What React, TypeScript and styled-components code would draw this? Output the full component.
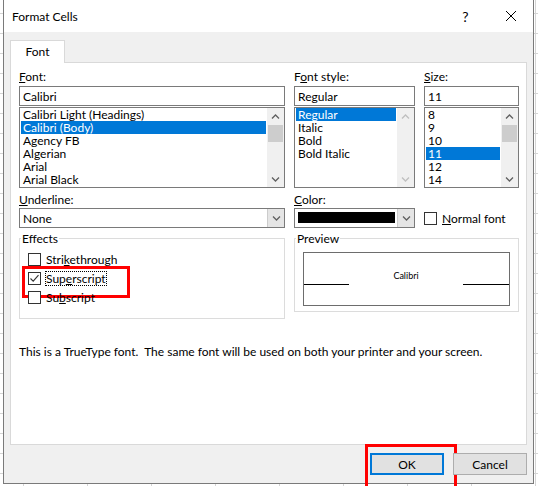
import React from "react";
import styled, { createGlobalStyle } from "styled-components";

const FONT = `Lato, "Liberation Sans", Arial, sans-serif`;

const Global = createGlobalStyle`
  html, body { margin: 0; padding: 0; }
  body {
    width: 538px;
    height: 486px;
    overflow: hidden;
    background-color: #fff;
    background-image:
      linear-gradient(#d4d4d4 1px, transparent 1px),
      linear-gradient(90deg, #d4d4d4 1px, transparent 1px);
    background-size: 100% 20px, 64px 100%;
    background-position: 0 13px, 535px 0;
    font-family: ${FONT};
    font-size: 12px;
    color: #000;
  }
  * { box-sizing: border-box; }
`;

const Dialog = styled.div`
  margin-left: 3px;
  width: 531px;
  height: 484px;
  border: 1px solid #7a7a7a;
  border-top: none;
  background: #f0f0f0;
  display: flex;
  flex-direction: column;
`;

const TitleBar = styled.div`
  height: 32px;
  flex: none;
  background: #fff;
  display: flex;
  align-items: center;
  padding-left: 8px;
`;

const TitleText = styled.div`
  flex: 1;
  font-size: 12px;
`;

const TitleButton = styled.div`
  width: 45px;
  height: 32px;
  display: flex;
  align-items: center;
  justify-content: center;
  font-size: 14px;
`;

const Body = styled.div`
  flex: 1;
  display: flex;
  flex-direction: column;
  padding: 8px 6px 0 6px;
`;

const TabStrip = styled.div`
  display: flex;
  height: 22px;
`;

const Tab = styled.div`
  position: relative;
  z-index: 1;
  width: 55px;
  height: 23px;
  background: #fff;
  border: 1px solid #d9d9d9;
  border-bottom: none;
  display: flex;
  align-items: center;
  justify-content: center;
  padding-bottom: 1px;
`;

const Panel = styled.div`
  height: 383px;
  background: #fff;
  border: 1px solid #d9d9d9;
  padding: 6px 7px 0 8px;
`;

const Grid = styled.div`
  display: grid;
  grid-template-columns: 266px 121px 95px;
  column-gap: 9px;
  align-items: start;
`;

const Field = styled.div<{ $top?: number }>`
  display: flex;
  flex-direction: column;
  margin-top: ${(p) => p.$top ?? 0}px;
`;

const Label = styled.div`
  height: 15px;
  line-height: 15px;
  margin-bottom: 1px;
  white-space: nowrap;
`;

const TopLabel = styled(Label)`
  margin-bottom: 2px;
`;

const TextBox = styled.div`
  height: 20px;
  border: 1px solid #7a7a7a;
  padding: 0 3px;
  display: flex;
  align-items: center;
  background: #fff;
`;

const ListBox = styled.div`
  height: 81px;
  margin-top: 1px;
  border: 1px solid #7a7a7a;
  display: flex;
  background: #fff;
`;

const Items = styled.div`
  flex: 1;
  padding: 0 1px;
  min-width: 0;
`;

const Item = styled.div<{ $selected?: boolean }>`
  height: 13px;
  line-height: 13px;
  padding-left: 2px;
  white-space: nowrap;
  overflow: hidden;
  background: ${(p) => (p.$selected ? "#0078d7" : "transparent")};
  color: ${(p) => (p.$selected ? "#fff" : "#000")};
`;

const ScrollBar = styled.div`
  width: 17px;
  flex: none;
  background: #f0f0f0;
  display: flex;
  flex-direction: column;
`;

const ArrowBox = styled.div`
  height: 17px;
  flex: none;
  display: flex;
  align-items: center;
  justify-content: center;
`;

const Track = styled.div`
  flex: 1;
  display: flex;
  flex-direction: column;
`;

const Thumb = styled.div`
  height: 17px;
  margin: 0 1px;
  background: #cdcdcd;
`;

const Combo = styled.div`
  height: 20px;
  border: 1px solid #7a7a7a;
  display: flex;
  background: #fff;
`;

const ComboText = styled.div`
  flex: 1;
  padding-left: 3px;
  display: flex;
  align-items: center;
`;

const Swatch = styled.div`
  width: 97px;
  height: 11px;
  margin: 3px 2px 0 3px;
  background: #000;
`;

const DropButton = styled.div`
  width: 17px;
  flex: none;
  background: #e5e5e5;
  border-left: 1px solid #cccccc;
  display: flex;
  align-items: center;
  justify-content: center;
`;

const CheckRow = styled.div<{ $highlight?: boolean }>`
  position: relative;
  height: 19px;
  display: flex;
  align-items: center;
  gap: 5px;
  white-space: nowrap;
  &::after {
    content: "";
    display: ${(p) => (p.$highlight ? "block" : "none")};
    position: absolute;
    left: -6px;
    top: -3px;
    width: 102px;
    height: 26px;
    border: 3px solid #ff0000;
  }
`;

const Box = styled.div`
  width: 13px;
  height: 13px;
  flex: none;
  border: 1px solid #333;
  background: #fff;
  display: flex;
  align-items: center;
  justify-content: center;
`;

const FocusLabel = styled.span`
  line-height: 13px;
  outline: 1px dotted #000;
`;

const NormalFont = styled.div`
  align-self: end;
  height: 20px;
  display: flex;
  align-items: center;
  gap: 5px;
  white-space: nowrap;
`;

const Group = styled.fieldset<{ $span?: boolean }>`
  margin: 3px 0 0 0;
  padding: 0;
  min-inline-size: 0;
  border: 1px solid #dcdcdc;
  grid-column: ${(p) => (p.$span ? "2 / 4" : "auto")};
`;

const Legend = styled.legend`
  margin-left: 1px;
  padding: 0 1px;
  line-height: 15px;
  height: 15px;
`;

const EffectsBody = styled.div`
  padding: 4px 0 11px 8px;
`;

const PreviewBody = styled.div`
  padding: 6px 8px 5px 8px;
`;

const PreviewBox = styled.div`
  height: 54px;
  border: 1px solid #6d6d6d;
  background: #fff;
  display: grid;
  grid-template-columns: 45px 1fr 46px;
`;

const BaseLine = styled.div`
  margin-top: 31px;
  height: 1px;
  background: #000;
`;

const PreviewText = styled.div`
  padding-top: 17px;
  font-size: 9px;
  line-height: 11px;
  text-align: center;
`;

const Description = styled.p`
  margin: 25px 0 0 0;
  line-height: 15px;
  white-space: nowrap;
`;

const Buttons = styled.div`
  display: flex;
  justify-content: flex-end;
  gap: 9px;
  margin-top: 8px;
`;

const Button = styled.div<{ $default?: boolean; $highlight?: boolean }>`
  position: relative;
  width: 74px;
  height: 22px;
  background: #e1e1e1;
  border: ${(p) => (p.$default ? "2px solid #0078d7" : "1px solid #adadad")};
  display: flex;
  align-items: center;
  justify-content: center;
  &::after {
    content: "";
    display: ${(p) => (p.$highlight ? "block" : "none")};
    position: absolute;
    left: -7px;
    top: -11px;
    width: 86px;
    height: 40px;
    border: 3px solid #ff0000;
  }
`;

const Chevron = ({ down, color = "#606060" }: { down?: boolean; color?: string }) => (
  <svg width="9" height="6" viewBox="0 0 9 6">
    <path
      d={down ? "M1 1.5 L4.5 5 L8 1.5" : "M1 4.5 L4.5 1 L8 4.5"}
      fill="none"
      stroke={color}
      strokeWidth="1.3"
    />
  </svg>
);

const CheckMark = () => (
  <svg width="11" height="11" viewBox="0 0 11 11">
    <path d="M1.5 5.5 L4.2 8.2 L9.5 2.2" fill="none" stroke="#333" strokeWidth="1.1" />
  </svg>
);

const CloseIcon = () => (
  <svg width="10" height="10" viewBox="0 0 10 10">
    <path d="M0 0 L10 10 M10 0 L0 10" stroke="#000" strokeWidth="1" />
  </svg>
);

type ListProps = { items: string[]; selected: number; disabled?: boolean; thumb?: boolean };

const List = ({ items, selected, disabled, thumb }: ListProps) => (
  <ListBox>
    <Items>
      {items.map((it, i) => (
        <Item key={it} $selected={i === selected}>
          {it}
        </Item>
      ))}
    </Items>
    <ScrollBar>
      <ArrowBox>
        <Chevron color={disabled ? "#bfbfbf" : "#606060"} />
      </ArrowBox>
      <Track>{thumb && <Thumb />}</Track>
      <ArrowBox>
        <Chevron down color={disabled ? "#bfbfbf" : "#606060"} />
      </ArrowBox>
    </ScrollBar>
  </ListBox>
);

export default function App() {
  return (
    <>
      <Global />
      <Dialog>
        <TitleBar>
          <TitleText>Format Cells</TitleText>
          <TitleButton>?</TitleButton>
          <TitleButton>
            <CloseIcon />
          </TitleButton>
        </TitleBar>
        <Body>
          <TabStrip>
            <Tab>Font</Tab>
          </TabStrip>
          <Panel>
            <Grid>
              <Field>
                <TopLabel>
                  <u>F</u>ont:
                </TopLabel>
                <TextBox>Calibri</TextBox>
                <List
                  items={["Calibri Light (Headings)", "Calibri (Body)", "Agency FB", "Algerian", "Arial", "Arial Black"]}
                  selected={1}
                  thumb
                />
              </Field>
              <Field>
                <TopLabel>
                  F<u>o</u>nt style:
                </TopLabel>
                <TextBox>Regular</TextBox>
                <List items={["Regular", "Italic", "Bold", "Bold Italic"]} selected={0} disabled />
              </Field>
              <Field>
                <TopLabel>
                  <u>S</u>ize:
                </TopLabel>
                <TextBox>11</TextBox>
                <List items={["8", "9", "10", "11", "12", "14"]} selected={3} thumb />
              </Field>

              <Field $top={4}>
                <Label>
                  <u>U</u>nderline:
                </Label>
                <Combo>
                  <ComboText>None</ComboText>
                  <DropButton>
                    <Chevron down />
                  </DropButton>
                </Combo>
              </Field>
              <Field $top={4}>
                <Label>
                  <u>C</u>olor:
                </Label>
                <Combo>
                  <Swatch />
                  <DropButton>
                    <Chevron down />
                  </DropButton>
                </Combo>
              </Field>
              <NormalFont>
                <Box />
                <span>
                  <u>N</u>ormal font
                </span>
              </NormalFont>

              <Group>
                <Legend>Effects</Legend>
                <EffectsBody>
                  <CheckRow>
                    <Box />
                    <span>
                      Stri<u>k</u>ethrough
                    </span>
                  </CheckRow>
                  <CheckRow $highlight>
                    <Box>
                      <CheckMark />
                    </Box>
                    <FocusLabel>
                      Sup<u>e</u>rscript
                    </FocusLabel>
                  </CheckRow>
                  <CheckRow>
                    <Box />
                    <span>
                      Su<u>b</u>script
                    </span>
                  </CheckRow>
                </EffectsBody>
              </Group>
              <Group $span>
                <Legend>Preview</Legend>
                <PreviewBody>
                  <PreviewBox>
                    <BaseLine />
                    <PreviewText>Calibri</PreviewText>
                    <BaseLine />
                  </PreviewBox>
                </PreviewBody>
              </Group>
            </Grid>
            <Description>
              This is a TrueType font.&nbsp; The same font will be used on both your printer and your screen.
            </Description>
          </Panel>
          <Buttons>
            <Button $default $highlight>
              OK
            </Button>
            <Button>Cancel</Button>
          </Buttons>
        </Body>
      </Dialog>
    </>
  );
}
